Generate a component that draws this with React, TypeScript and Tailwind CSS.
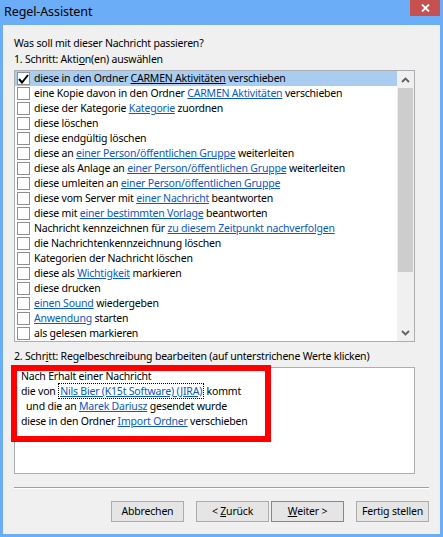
import React from "react";

type Part = [string, boolean?];

const rows: Part[][] = [
  [["diese in den Ordner "], ["CARMEN Aktivitäten", true], [" verschieben"]],
  [["eine Kopie davon in den Ordner "], ["CARMEN Aktivitäten", true], [" verschieben"]],
  [["diese der Kategorie "], ["Kategorie", true], [" zuordnen"]],
  [["diese löschen"]],
  [["diese endgültig löschen"]],
  [["diese an "], ["einer Person/öffentlichen Gruppe", true], [" weiterleiten"]],
  [["diese als Anlage an "], ["einer Person/öffentlichen Gruppe", true], [" weiterleiten"]],
  [["diese umleiten an "], ["einer Person/öffentlichen Gruppe", true]],
  [["diese vom Server mit "], ["einer Nachricht", true], [" beantworten"]],
  [["diese mit "], ["einer bestimmten Vorlage", true], [" beantworten"]],
  [["Nachricht kennzeichnen für "], ["zu diesem Zeitpunkt nachverfolgen", true]],
  [["die Nachrichtenkennzeichnung löschen"]],
  [["Kategorien der Nachricht löschen"]],
  [["diese als "], ["Wichtigkeit", true], [" markieren"]],
  [["diese drucken"]],
  [["einen Sound", true], [" wiedergeben"]],
  [["Anwendung", true], [" starten"]],
  [["als gelesen markieren"]],
];

const Link = ({ children, dark }: { children: React.ReactNode; dark?: boolean }) => (
  <span className={dark ? "underline text-black" : "underline text-[#0a58ca]"}>{children}</span>
);

function Chevron({ up }: { up?: boolean }) {
  return (
    <svg width="9" height="6" viewBox="0 0 9 6">
      <path
        d={up ? "M1 5 L4.5 1.5 L8 5" : "M1 1 L4.5 4.5 L8 1"}
        fill="none"
        stroke="#606060"
        strokeWidth="1.8"
      />
    </svg>
  );
}

function Button({ children, primary }: { children: React.ReactNode; primary?: boolean }) {
  return (
    <div
      className={`w-[73px] h-[21px] flex items-center justify-center whitespace-pre text-black bg-[#e5e5e5] border ${
        primary ? "border-[#3c9bf0]" : "border-[#acacac]"
      }`}
    >
      {children}
    </div>
  );
}

export default function App() {
  return (
    <div
      className="w-[443px] h-[537px] bg-[#6badf6] flex flex-col px-[3px] pb-[3px] text-[10.5px] leading-[15px] tracking-[-0.2px] text-black"
      style={{ fontFamily: '"Noto Sans", "Open Sans", sans-serif' }}
    >
      {/* title bar */}
      <div className="h-[25px] flex items-start justify-between">
        <div className="pl-[1px] pt-[3px] text-[12.5px] leading-[18px] tracking-[-0.1px]">Regel-Assistent</div>
        <div className="w-[30px] h-[16px] bg-[#c75050] flex items-center justify-center">
          <svg width="9" height="8" viewBox="0 0 9 8">
            <path d="M1 0.5 L8 7.5 M8 0.5 L1 7.5" stroke="white" strokeWidth="1.8" />
          </svg>
        </div>
      </div>

      {/* body */}
      <div className="flex-1 bg-[#f0f0f0] flex flex-col pt-[10px] px-[11px]">
        <div className="h-[16px] leading-[16px]">Was soll mit dieser Nachricht passieren?</div>
        <div className="h-[16px] leading-[16px]">
          1. Schritt: Akti<span className="underline">o</span>n(en) auswählen
        </div>

        {/* action list */}
        <div className="mt-[3px] w-[401px] h-[272px] border border-[#abadb3] bg-white flex">
          <div className="flex-1 flex flex-col">
            {rows.map((parts, i) => (
              <div
                key={i}
                className={`h-[15px] flex items-center pl-[2px] whitespace-pre ${
                  i === 0 ? "bg-[#a9cdf1]" : ""
                }`}
              >
                <div className="w-[13px] h-[13px] border border-[#8f8f8f] bg-white flex items-center justify-center shrink-0">
                  {i === 0 && (
                    <svg width="11" height="10" viewBox="0 0 11 10">
                      <path d="M1 5 L4 8.5 L10 1" fill="none" stroke="black" strokeWidth="2" />
                    </svg>
                  )}
                </div>
                <div className="pl-[4px]">
                  {parts.map(([t, link], j) =>
                    link ? (
                      <Link key={j} dark={i === 0}>
                        {t}
                      </Link>
                    ) : (
                      <span key={j}>{t}</span>
                    )
                  )}
                </div>
              </div>
            ))}
          </div>
          {/* scrollbar */}
          <div className="w-[17px] bg-[#f0f0f0] flex flex-col">
            <div className="h-[17px] flex items-center justify-center">
              <Chevron up />
            </div>
            <div className="h-[184px] mx-[1px] bg-[#cdcdcd]" />
            <div className="flex-1" />
            <div className="h-[17px] flex items-center justify-center">
              <Chevron />
            </div>
          </div>
        </div>

        <div className="mt-[6px] h-[16px] leading-[16px]">
          2. Schr<span className="underline">i</span>tt: Regelbeschreibung bearbeiten (auf unterstrichene Werte klicken)
        </div>

        {/* description */}
        <div className="mt-[3px] w-[401px] h-[107px] border border-[#abadb3] bg-white relative pl-[6px] pt-[1px] whitespace-pre">
          <div className="h-[15px]">Nach Erhalt einer Nachricht</div>
          <div className="h-[15px]">
            {"die von "}
            <span className="px-[1px] border border-dotted border-black">
              <Link>Nils Bier (K15t Software) (JIRA)</Link>
            </span>
            {" kommt"}
          </div>
          <div className="h-[15px]">
            {"  und die an "}
            <Link>Marek Dariusz</Link>
            {" gesendet wurde"}
          </div>
          <div className="h-[15px]">
            {"diese in den Ordner "}
            <Link>Import Ordner</Link>
            {" verschieben"}
          </div>
          <div className="absolute left-[-4px] top-[-3px] w-[260px] h-[77px] border-[6px] border-[#ff0000] pointer-events-none" />
        </div>

        <div className="mt-[13px] h-[2px] border-t border-[#a0a0a0] border-b border-b-white" />

        {/* buttons */}
        <div className="mt-[12px] flex justify-end">
          <Button>Abbrechen</Button>
          <div className="w-[12px]" />
          <Button>
            {"< "}
            <span className="underline">Z</span>
            {"urück"}
          </Button>
          <div className="w-[2px]" />
          <Button primary>
            <span className="underline">W</span>
            {"eiter >"}
          </Button>
          <div className="w-[12px]" />
          <Button>Fertig stellen</Button>
        </div>
      </div>
    </div>
  );
}
